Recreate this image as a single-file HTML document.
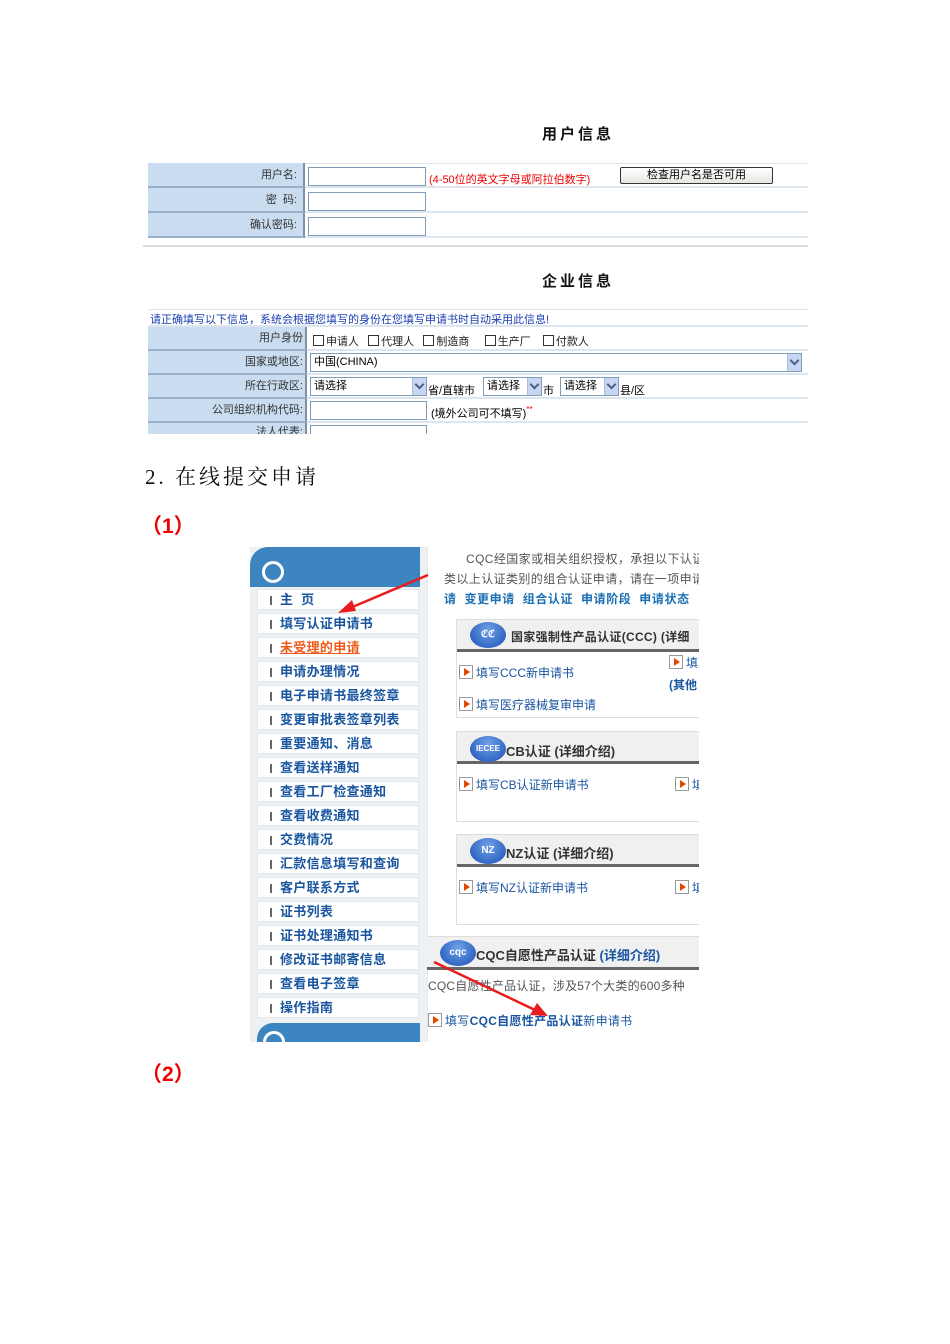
<!DOCTYPE html>
<html><head><meta charset="utf-8"><style>
*{margin:0;padding:0;box-sizing:border-box}
body{width:950px;height:1344px;background:#fff;position:relative;overflow:hidden;font-family:"Liberation Sans","Noto Sans CJK SC",sans-serif;}
.a{position:absolute;white-space:nowrap}
.lab{position:absolute;background:#c9dcf0;border-bottom:2px solid #9ab0c8;border-right:2px solid #7f93a8;font-size:11px;color:#333;text-align:right;padding-right:6px;}
.row{position:absolute;border-bottom:2px solid #dde6ef}
.inp{position:absolute;border:1px solid #7f9db9;background:#fff}
.sel{position:absolute;border:1px solid #7f9db9;background:#fff;font-size:11px;padding-left:3px;line-height:16px}
.sel i{position:absolute;right:0;top:0;width:14px;height:100%;background:#c7d6f2;border-left:1px solid #a8bde0}
.sel i:after{content:"";position:absolute;left:3px;top:3px;width:5px;height:5px;border-right:2px solid #4d6185;border-bottom:2px solid #4d6185;transform:rotate(45deg)}
.cb{display:inline-block;width:11px;height:11px;border:1px solid #333;vertical-align:-1px;margin-right:2px}
.mi{position:absolute;left:257px;width:162px;height:21px;border:1px solid #e3e7ec;background:#fff;font-size:13px;font-weight:bold;color:#1a56a0;padding-left:22px;line-height:20px;letter-spacing:0.3px}
.mi:before{content:"";position:absolute;left:12px;top:6px;width:2px;height:9px;background:#666}
.box{position:absolute;border:1px solid #ddd;border-right:none;background:#fff}
.bh{position:absolute;left:0;right:0;top:0;height:32px;background:#f0f0f0;border-bottom:3px solid #666}
.logo{position:absolute;width:36px;height:26px;border-radius:50%;background:radial-gradient(circle at 50% 30%,#6fa0e8,#1a4fb5);color:#fff;font-size:10px;font-weight:bold;text-align:center;line-height:26px}
.ar{display:inline-block;width:14px;height:14px;border:1px solid #999;position:relative;vertical-align:-2px;margin-right:3px}
.ar:after{content:"";position:absolute;left:4px;top:2px;border-left:6px solid #e04a00;border-top:4px solid transparent;border-bottom:4px solid transparent}
.lk{font-size:12px;color:#1a56a0}
.clip{position:absolute;left:427px;top:547px;width:272px;height:495px;overflow:hidden}
.inner{position:absolute;left:-427px;top:-547px;width:950px;height:1344px}
</style></head><body>

<div class="a" style="left:542px;top:123px;font-size:15px;font-weight:bold;color:#111;letter-spacing:3px">用户信息</div>

<div class="row" style="left:148px;top:163px;width:660px;height:25px;border-top:1px solid #dde6ef"></div>
<div class="row" style="left:148px;top:188px;width:660px;height:25px"></div>
<div class="row" style="left:148px;top:213px;width:660px;height:25px"></div>
<div class="lab" style="left:148px;top:163px;width:157px;height:25px;line-height:24px">用户名:</div>
<div class="lab" style="left:148px;top:188px;width:157px;height:25px;line-height:24px">密&nbsp;&nbsp;码:</div>
<div class="lab" style="left:148px;top:213px;width:157px;height:25px;line-height:24px">确认密码:</div>
<div class="inp" style="left:308px;top:167px;width:118px;height:19px"></div>
<div class="inp" style="left:308px;top:192px;width:118px;height:19px"></div>
<div class="inp" style="left:308px;top:217px;width:118px;height:19px"></div>
<div class="a" style="left:429px;top:171px;font-size:11px;color:#e00">(4-50位的英文字母或阿拉伯数字)</div>
<div class="a" style="left:620px;top:167px;width:153px;height:17px;border:1px solid #333;border-radius:2px;background:linear-gradient(#fff,#e6e6e0);font-size:11px;text-align:center;line-height:15px">检查用户名是否可用</div>
<div class="a" style="left:143px;top:245px;width:665px;height:2px;background:#ddd"></div>

<div class="a" style="left:542px;top:270px;font-size:15px;font-weight:bold;color:#111;letter-spacing:3px">企业信息</div>

<div class="row" style="left:148px;top:309px;width:660px;height:18px;border-top:1px solid #dde6ef"></div>
<div class="a" style="left:150px;top:311px;font-size:11px;color:#1a3fb0">请正确填写以下信息，系统会根据您填写的身份在您填写申请书时自动采用此信息!</div>
<div class="row" style="left:148px;top:327px;width:660px;height:24px"></div>
<div class="row" style="left:148px;top:351px;width:660px;height:24px"></div>
<div class="row" style="left:148px;top:375px;width:660px;height:24px"></div>
<div class="row" style="left:148px;top:399px;width:660px;height:24px"></div>
<div class="lab" style="left:148px;top:327px;width:159px;height:24px;line-height:22px;padding-right:2px">用户身份</div>
<div class="lab" style="left:148px;top:351px;width:159px;height:24px;line-height:22px;padding-right:2px">国家或地区:</div>
<div class="lab" style="left:148px;top:375px;width:159px;height:24px;line-height:22px;padding-right:2px">所在行政区:</div>
<div class="lab" style="left:148px;top:399px;width:159px;height:24px;line-height:22px;padding-right:2px">公司组织机构代码:</div>
<div class="lab" style="left:148px;top:423px;width:159px;height:11px;line-height:18px;overflow:hidden;padding-right:2px;border-bottom:none">法人代表:</div>
<div class="a" style="left:313px;top:333px;font-size:11px;color:#222"><span class="cb"></span>申请人&nbsp;&nbsp;&nbsp;<span class="cb"></span>代理人&nbsp;&nbsp;&nbsp;<span class="cb"></span>制造商&nbsp;&nbsp;&nbsp;&nbsp;&nbsp;<span class="cb"></span>生产厂&nbsp;&nbsp;&nbsp;&nbsp;<span class="cb"></span>付款人</div>
<div class="sel" style="left:310px;top:353px;width:492px;height:19px;line-height:17px">中国(CHINA)<i></i></div>
<div class="sel" style="left:310px;top:377px;width:117px;height:19px">请选择<i></i></div>
<div class="a" style="left:428px;top:382px;font-size:11px">省/直辖市</div>
<div class="sel" style="left:483px;top:377px;width:59px;height:19px">请选择<i></i></div>
<div class="a" style="left:543px;top:382px;font-size:11px">市</div>
<div class="sel" style="left:560px;top:377px;width:59px;height:19px">请选择<i></i></div>
<div class="a" style="left:620px;top:382px;font-size:11px">县/区</div>
<div class="inp" style="left:310px;top:401px;width:117px;height:19px"></div>
<div class="a" style="left:431px;top:405px;font-size:11px">(境外公司可不填写)<span style="color:#e00;font-size:8px;vertical-align:top">**</span></div>
<div class="inp" style="left:310px;top:425px;width:117px;height:9px;border-bottom:none"></div>
<div class="a" style="left:140px;top:434px;width:680px;height:10px;background:#fff"></div>

<div class="a" style="left:145px;top:461px;font-size:21px;color:#111;font-family:'Liberation Serif','Noto Serif CJK SC',serif;letter-spacing:3px">2. 在线提交申请</div>
<div class="a" style="left:141px;top:510px;font-size:21px;font-weight:bold;color:#e00">（1）</div>

<!-- sidebar -->
<div class="a" style="left:250px;top:547px;width:177px;height:495px;background:#eef1f4"></div>
<div class="a" style="left:250px;top:547px;width:170px;height:40px;background:#3d85c0;border-radius:18px 0 0 0"></div>
<div class="a" style="left:262px;top:561px;width:22px;height:22px;border:3px solid #fff;border-radius:50%"></div>
<div class="mi" style="top:589px">主&nbsp;&nbsp;页</div>
<div class="mi" style="top:613px">填写认证申请书</div>
<div class="mi" style="top:637px;color:#f05a1a;text-decoration:underline">未受理的申请</div>
<div class="mi" style="top:661px">申请办理情况</div>
<div class="mi" style="top:685px">电子申请书最终签章</div>
<div class="mi" style="top:709px">变更审批表签章列表</div>
<div class="mi" style="top:733px">重要通知、消息</div>
<div class="mi" style="top:757px">查看送样通知</div>
<div class="mi" style="top:781px">查看工厂检查通知</div>
<div class="mi" style="top:805px">查看收费通知</div>
<div class="mi" style="top:829px">交费情况</div>
<div class="mi" style="top:853px">汇款信息填写和查询</div>
<div class="mi" style="top:877px">客户联系方式</div>
<div class="mi" style="top:901px">证书列表</div>
<div class="mi" style="top:925px">证书处理通知书</div>
<div class="mi" style="top:949px">修改证书邮寄信息</div>
<div class="mi" style="top:973px">查看电子签章</div>
<div class="mi" style="top:997px">操作指南</div>
<div class="a" style="left:257px;top:1023px;width:163px;height:19px;background:#3d85c0;border-radius:16px 0 0 0;overflow:hidden"><div style="position:absolute;left:6px;top:8px;width:22px;height:22px;border:3px solid #fff;border-radius:50%"></div></div>

<!-- right -->
<div class="a" style="left:427px;top:547px;width:272px;height:495px;background:#fff;border-left:1px solid #e8e8e8"></div>
<div class="clip"><div class="inner">
<div class="a" style="left:466px;top:550px;font-size:12px;color:#555;letter-spacing:0.4px">CQC经国家或相关组织授权，承担以下认证</div>
<div class="a" style="left:444px;top:570px;font-size:12px;color:#555;letter-spacing:0.4px">类以上认证类别的组合认证申请，请在一项申请</div>
<div class="a" style="left:444px;top:590px;font-size:12px;font-weight:bold;color:#1a6fb5;letter-spacing:0.6px">请&nbsp;&nbsp;变更申请&nbsp;&nbsp;组合认证&nbsp;&nbsp;申请阶段&nbsp;&nbsp;申请状态</div>

<div class="box" style="left:456px;top:619px;width:243px;height:99px"><div class="bh"></div></div>
<div class="logo" style="left:470px;top:622px">ℭℭ</div>
<div class="a" style="left:511px;top:628px;font-size:12px;font-weight:bold;color:#333;letter-spacing:0.3px">国家强制性产品认证(CCC) (详细</div>
<div class="a lk" style="left:459px;top:664px"><span class="ar"></span>填写CCC新申请书</div>
<div class="a lk" style="left:669px;top:654px"><span class="ar"></span>填写</div>
<div class="a" style="left:669px;top:676px;font-size:12px;font-weight:bold;color:#1a56a0">(其他</div>
<div class="a lk" style="left:459px;top:696px"><span class="ar"></span>填写医疗器械复审申请</div>

<div class="box" style="left:456px;top:731px;width:243px;height:91px"><div class="bh"></div></div>
<div class="logo" style="left:470px;top:736px;font-size:8px">IECEE</div>
<div class="a" style="left:506px;top:741px;font-size:13px;font-weight:bold;color:#333">CB认证 (详细介绍)</div>
<div class="a lk" style="left:459px;top:776px"><span class="ar"></span>填写CB认证新申请书</div>
<div class="a lk" style="left:675px;top:776px"><span class="ar"></span>填写</div>

<div class="box" style="left:456px;top:834px;width:243px;height:91px"><div class="bh"></div></div>
<div class="logo" style="left:470px;top:838px">NZ</div>
<div class="a" style="left:506px;top:843px;font-size:13px;font-weight:bold;color:#333">NZ认证 (详细介绍)</div>
<div class="a lk" style="left:459px;top:879px"><span class="ar"></span>填写NZ认证新申请书</div>
<div class="a lk" style="left:675px;top:879px"><span class="ar"></span>填写</div>

<div class="a" style="left:427px;top:936px;width:272px;height:34px;background:#f0f0f0;border-top:1px solid #ddd;border-bottom:3px solid #666"></div>
<div class="logo" style="left:440px;top:940px">cqc</div>
<div class="a" style="left:476px;top:945px;font-size:13px;font-weight:bold;color:#333">CQC自愿性产品认证 <span style="color:#1a56a0">(详细介绍)</span></div>
<div class="a" style="left:428px;top:977px;font-size:12px;color:#555;letter-spacing:0.2px">CQC自愿性产品认证，涉及57个大类的600多种</div>
<div class="a lk" style="left:428px;top:1012px;letter-spacing:0.3px"><span class="ar"></span>填写<b>CQC自愿性产品认证</b>新申请书</div>
</div></div>

<svg class="a" style="left:0;top:0" width="950" height="1344">
<line x1="428" y1="575" x2="350" y2="608" stroke="#e81c1c" stroke-width="2.5"/>
<polygon points="338,613 352,600 356,611" fill="#e81c1c"/>
<line x1="434" y1="962" x2="535" y2="1010" stroke="#e81c1c" stroke-width="2.5"/>
<polygon points="548,1016 530,1015 537,1003" fill="#e81c1c"/>
</svg>

<div class="a" style="left:141px;top:1058px;font-size:21px;font-weight:bold;color:#e00">（2）</div>
</body></html>
